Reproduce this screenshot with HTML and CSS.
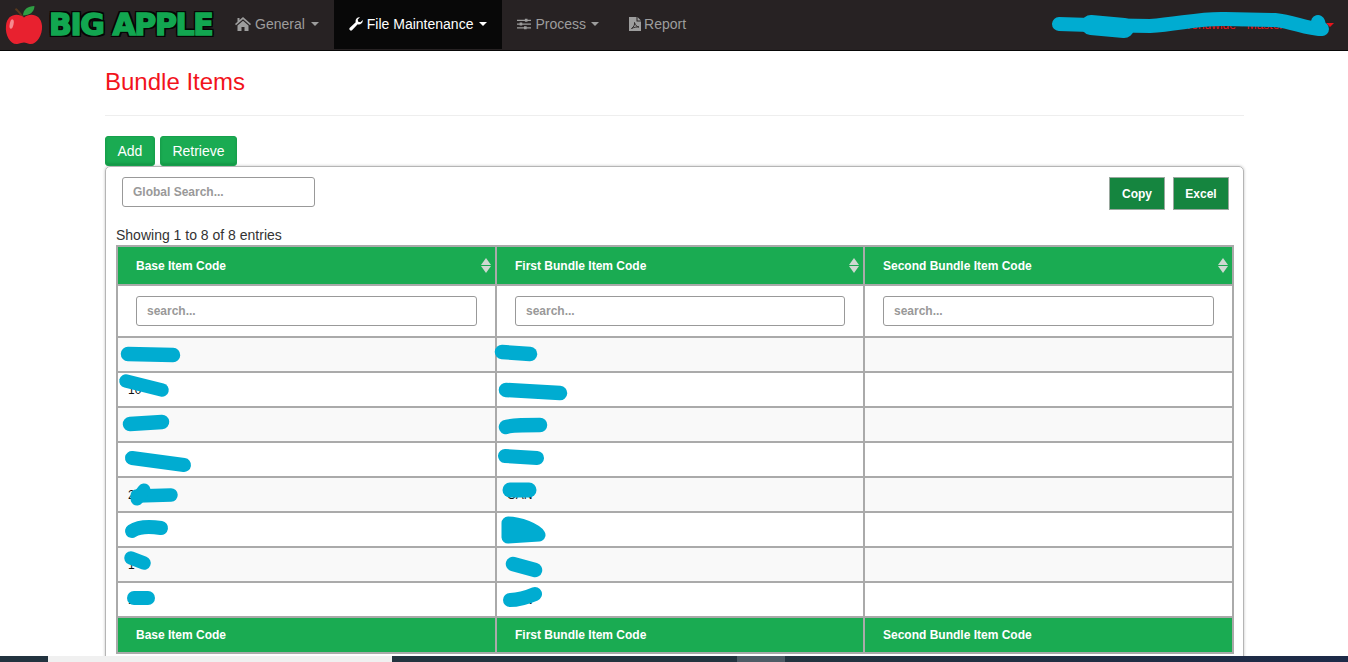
FILE: index.html
```html
<!DOCTYPE html>
<html lang="en">
<head>
<meta charset="utf-8">
<title>Bundle Items</title>
<link rel="stylesheet" href="styles.css">
</head>
<body>
<nav class="navbar">
  <a class="brand" href="#">
    <svg class="apple" viewBox="0 0 40 42" width="38" height="40">
      <path d="M19 13 C16 9 14 6 11 4" stroke="#5b3a1e" stroke-width="2" fill="none"/>
      <path d="M19 11 C19 5 24 1 31 1 C31 7 26 11 19 11Z" fill="#2f9e44"/>
      <path d="M20 13 C26 8 38 9 39 22 C39.500 32 33 42 26 41 C23 40.500 22 39.500 20 39.500 C18 39.500 16 40.500 13 41 C6 42 0 32 1 22 C2 9 14 8 20 13Z" fill="#e8212f"/>
      <ellipse cx="7" cy="20" rx="2" ry="5" fill="#f58a8f" transform="rotate(12 7 20)"/>
    </svg>
    <span class="brand-text">BIG APPLE</span>
  </a>
  <ul class="nav-list">
    <li class="nav-item">
      <svg class="nav-icon" viewBox="0 0 16 14" width="16" height="14"><path d="M8 0 L16 7 L15 8.300 L8 2.300 L1 8.300 L0 7 L2.500 4.800 V1 H4.500 V3.100Z M2.500 8.500 L8 3.800 L13.500 8.500 V14 H9.500 V10 H6.500 V14 H2.500Z" fill="currentColor"/></svg>
      General<span class="caret"></span>
    </li>
    <li class="nav-item active">
      <svg class="nav-icon" viewBox="0 0 14 14" width="14" height="14"><path d="M13.800 3 A4 4 0 0 1 8.700 7.200 L3 13.300 A1.700 1.700 0 0 1 .6 11 L6.700 5.200 A4 4 0 0 1 11 .2 L8.700 2.600 L9.200 4.800 L11.400 5.300Z" fill="currentColor"/></svg>
      File Maintenance<span class="caret"></span>
    </li>
    <li class="nav-item">
      <svg class="nav-icon" viewBox="0 0 16 14" width="14" height="14"><path d="M0 2 H9 V1 H12 V2 H16 V3.500 H12 V4.500 H9 V3.500 H0Z M0 6.300 H3 V5.300 H6 V6.300 H16 V7.800 H6 V8.800 H3 V7.800 H0Z M0 10.600 H8 V9.600 H11 V10.600 H16 V12 H11 V13 H8 V12 H0Z" fill="currentColor"/></svg>
      Process<span class="caret caret-tight"></span>
    </li>
    <li class="nav-item">
      <svg class="nav-icon icon-report" viewBox="0 0 12 14" width="12" height="14"><path d="M0 0 H7.500 V4.500 H12 V14 H0Z M8.500 0 L12 3.500 H8.500Z" fill="currentColor"/><path d="M2.500 11.500 C5 10 6 7 5.500 5.500 C6 8 7.500 9.500 10 10 C7.500 9.800 5 10.300 2.500 11.500Z" fill="none" stroke="#272223" stroke-width=".9"/></svg>
      Report
    </li>
  </ul>
  <div class="nav-user">Worldwide - Master Admin<span class="caret user-caret"></span></div>
</nav>

<main class="page">
  <div class="container">
    <h3 class="title">Bundle Items</h3>
    <hr class="rule">
    <div class="actions">
      <button class="btn" type="button">Add</button>
      <button class="btn" type="button">Retrieve</button>
    </div>
    <section class="panel">
      <div class="toolbar">
        <input class="field global-field" type="text" placeholder="Global Search...">
        <div class="export">
          <button class="btn-export" type="button">Copy</button>
          <button class="btn-export" type="button">Excel</button>
        </div>
      </div>
      <div class="info">Showing 1 to 8 of 8 entries</div>
      <table class="grid">
        <colgroup><col class="col-a"><col class="col-b"><col class="col-c"></colgroup>
        <thead>
          <tr class="head-row">
            <th><div class="th-inner">Base Item Code<span class="sort"></span></div></th>
            <th><div class="th-inner">First Bundle Item Code<span class="sort"></span></div></th>
            <th><div class="th-inner">Second Bundle Item Code<span class="sort"></span></div></th>
          </tr>
          <tr class="filter-row">
            <td><input class="field" type="text" placeholder="search..."></td>
            <td><input class="field" type="text" placeholder="search..."></td>
            <td><input class="field" type="text" placeholder="search..."></td>
          </tr>
        </thead>
        <tbody>
          <tr><td></td><td></td><td></td></tr>
          <tr><td>10</td><td></td><td></td></tr>
          <tr><td></td><td></td><td></td></tr>
          <tr><td></td><td></td><td></td></tr>
          <tr><td>2</td><td>CAN</td><td></td></tr>
          <tr><td></td><td></td><td></td></tr>
          <tr><td>1</td><td></td><td></td></tr>
          <tr><td>1</td><td>CAN</td><td></td></tr>
        </tbody>
        <tfoot>
          <tr class="foot-row">
            <th>Base Item Code</th>
            <th>First Bundle Item Code</th>
            <th>Second Bundle Item Code</th>
          </tr>
        </tfoot>
      </table>
    </section>
  </div>
</main>

<footer class="strip">
  <span class="seg seg-dark"></span>
  <span class="seg seg-light"></span>
  <span class="seg seg-mid"></span>
  <span class="seg seg-gray"></span>
  <span class="seg seg-navy"></span>
</footer>

<svg class="scribbles" viewBox="0 0 1348 662" width="1348" height="662" aria-hidden="true">
  <g fill="none" stroke="#00acd1" stroke-linecap="round" stroke-linejoin="round">
    <path stroke-width="14" d="M1059 24 L1090 25 L1150 26 C1180 24 1200 18 1225 19 L1275 20 C1295 22 1305 29 1322 29"/>
    <path stroke-width="20" d="M1091 25 L1124 28"/>
    <path stroke-width="14" d="M1318 22 L1320 29"/>
    <path stroke-width="14.500" d="M128 354 L173 355"/>
    <path stroke-width="14.500" d="M502 352 L530 354"/>
    <path stroke-width="13.500" d="M126 381 L162 390"/>
    <path stroke-width="14.500" d="M506 390 L560 393"/>
    <path stroke-width="14.500" d="M130 424 L162 422"/>
    <path stroke-width="14.500" d="M506 427 C510 425 530 425 540 425"/>
    <path stroke-width="14" d="M132 458 L184 465"/>
    <path stroke-width="14" d="M505 456 L537 458"/>
    <path stroke-width="13.500" d="M137 496 L171 495"/>
    <path stroke-width="13" d="M137 499 L144 490"/>
    <path stroke-width="15" d="M510 490 L529 490"/>
    <path stroke-width="14" d="M132 531 C138 527 148 526 161 528"/>
    <path stroke-width="13" d="M508 523 C520 523 536 530 539 535 L508 537 Z"/>
    <path stroke-width="13.500" d="M131 558 L144 563"/>
    <path stroke-width="14.500" d="M513 564 L535 570"/>
    <path stroke-width="14" d="M134 598 L148 598"/>
    <path stroke-width="14" d="M510 600 C518 600 528 597 535 594"/>
  </g>
</svg>
</body>
</html>
```

FILE: styles.css
```css
* { box-sizing: border-box; }

html, body { height: 100%; }

body {
  margin: 0;
  height: 100vh;
  overflow: hidden;
  display: flex;
  flex-direction: column;
  position: relative;
  background: #fff;
  color: #333;
  font-family: "Liberation Sans", Arial, sans-serif;
  font-size: 14px;
  line-height: 20px;
}

.navbar {
  flex: none;
  height: 51px;
  display: flex;
  align-items: flex-start;
  background: #272223;
  border-bottom: 1px solid #080808;
}

.brand {
  display: flex;
  align-items: center;
  width: 220px;
  height: 49px;
  padding: 0 0 0 5px;
  text-decoration: none;
}

.apple { flex: none; margin-right: 6px; }

.brand-text {
  font-family: "DejaVu Sans", sans-serif;
  font-weight: 700;
  font-size: 30px;
  letter-spacing: -1.400px;
  line-height: 30px;
  color: #12a650;
  -webkit-text-stroke: 1.5px #12a650;
  text-shadow: 2px 0 0 #050505, -2px 0 0 #050505, 0 2px 0 #050505, 0 -2px 0 #050505,
    2px 2px 0 #050505, -2px 2px 0 #050505, 2px -2px 0 #050505, -2px -2px 0 #050505;
  white-space: nowrap;
}

.nav-list {
  display: flex;
  list-style: none;
  margin: 0;
  padding: 0;
}

.nav-item {
  display: flex;
  align-items: center;
  height: 49px;
  padding: 0 15px 2px;
  color: #9d9d9d;
  white-space: nowrap;
}

.nav-item.active { background: #080808; color: #fff; }

.nav-icon { flex: none; margin-right: 4px; }

.icon-report { margin-right: 3px; }

.caret {
  display: inline-block;
  margin-left: 6px;
  border-top: 4px solid currentColor;
  border-left: 4px solid transparent;
  border-right: 4px solid transparent;
}

.caret-tight { margin-left: 5px; }

.nav-user {
  margin-left: auto;
  display: flex;
  align-items: center;
  height: 49px;
  padding-right: 14px;
  color: #e8141c;
  font-size: 12px;
}

.user-caret { margin-left: 6px; }

.page { flex: 1; min-height: 0; overflow: hidden; }

.container { width: 1170px; margin: 0 auto; padding: 0 15px 0 16px; }

.title {
  margin: 18px 0 20px;
  font-size: 24px;
  font-weight: 400;
  line-height: 26px;
  color: #f2131b;
}

.rule { margin: 0 0 20px; border: 0; border-top: 1px solid #eee; }

.actions { display: flex; gap: 5px; height: 30px; }

.btn {
  height: 30px;
  padding: 0 11.5px;
  background: #1aab52;
  border: 1px solid #17a04c;
  border-radius: 3px;
  box-shadow: inset 0 -2px 2px rgba(0, 80, 30, .2);
  color: #fff;
  font: 400 14px "Liberation Sans", Arial, sans-serif;
}

.panel {
  height: 520px;
  padding: 10px;
  border: 1px solid #b5b5b5;
  border-radius: 5px;
  box-shadow: 0 0 3px rgba(0, 0, 0, .25);
}

.toolbar {
  display: flex;
  justify-content: space-between;
  align-items: flex-start;
  padding: 0 4px 0 6px;
}

.field {
  display: block;
  width: 100%;
  height: 30px;
  padding: 0 10px;
  background: #fff;
  border: 1px solid #999;
  border-radius: 3px;
  color: #333;
  font: 700 12px "Liberation Sans", Arial, sans-serif;
}

.field::placeholder { color: #999; opacity: 1; }

.global-field { width: 193px; }

.export { display: flex; gap: 8px; }

.btn-export {
  width: 56px;
  height: 33px;
  padding: 0;
  background: #15853f;
  border: 1px solid #9aa89f;
  color: #fff;
  font: 700 12px "Liberation Sans", Arial, sans-serif;
}

.info { margin-top: 15px; height: 20px; }

.grid {
  width: 1116px;
  table-layout: fixed;
  border-collapse: collapse;
  font-size: 12px;
  color: #111;
}

.col-a { width: 379px; }
.col-b { width: 368px; }
.col-c { width: 369px; }

.grid th,
.grid td { border: 2px solid #aaa; }

.grid th {
  background: #1aab52;
  color: #fff;
  font-size: 12px;
  font-weight: 700;
  text-align: left;
  padding: 0 18px;
}

.grid td { padding: 0 10px; }

.head-row th { height: 39px; padding-right: 4px; }

.th-inner { display: flex; justify-content: space-between; align-items: center; }

.sort {
  display: flex;
  flex-direction: column;
  gap: 1px;
  width: 10px;
}

.sort::before,
.sort::after {
  content: "";
  display: block;
  border-left: 5px solid transparent;
  border-right: 5px solid transparent;
}

.sort::before { border-bottom: 7px solid #cfd8d2; }
.sort::after { border-top: 7px solid #cfd8d2; }

.grid .filter-row td { height: 52px; padding: 0 18px; }

.grid tbody td { height: 35px; }

.grid tbody tr:nth-child(odd) td { background: #f9f9f9; }

.foot-row th { height: 36px; }

.strip { flex: none; height: 6px; display: flex; }

.seg { display: block; height: 100%; }
.seg-dark { width: 48px; background: #22333f; }
.seg-light { width: 344px; background: #f0f0f0; }
.seg-mid { width: 345px; background: #22343f; }
.seg-gray { width: 48px; background: #4d5c66; }
.seg-navy { flex: 1; background: linear-gradient(90deg, #22343f, #1d2a48); }

.scribbles { position: absolute; left: 0; top: 0; pointer-events: none; }
```
